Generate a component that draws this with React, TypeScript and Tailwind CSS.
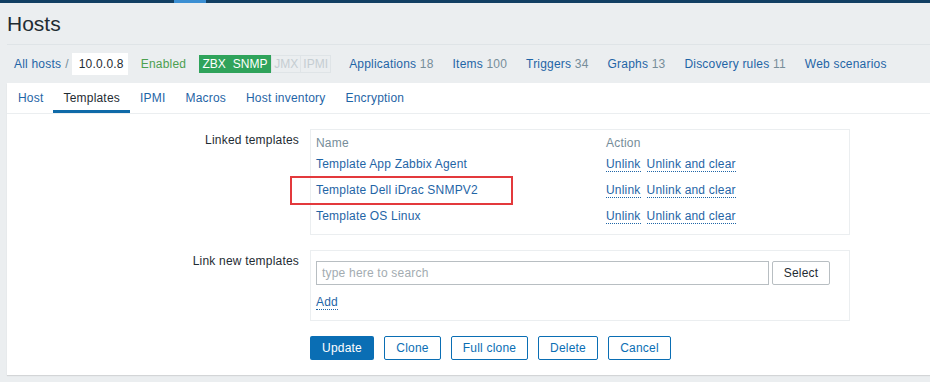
import React from 'react';

const linkCls = 'text-[#1f65a6]';

const navLinks: { label: string; count?: string }[] = [
  { label: 'Applications', count: '18' },
  { label: 'Items', count: '100' },
  { label: 'Triggers', count: '34' },
  { label: 'Graphs', count: '13' },
  { label: 'Discovery rules', count: '11' },
  { label: 'Web scenarios' },
];

const tabs = ['Host', 'Templates', 'IPMI', 'Macros', 'Host inventory', 'Encryption'];

const linked = ['Template App Zabbix Agent', 'Template Dell iDrac SNMPV2', 'Template OS Linux'];

const DotLink: React.FC<{ children: React.ReactNode; className?: string }> = ({ children, className = '' }) => (
  <span className={`${linkCls} border-b border-dotted border-[#1f65a6] leading-[14px] ${className}`}>{children}</span>
);

const App: React.FC = () => {
  return (
    <div className="min-h-[382px] overflow-hidden bg-[#ebeef0] font-['Liberation_Sans',Arial,sans-serif] text-[12px] tracking-[0.2px] text-[#1f2c33]">
      {/* top strip */}
      <div className="flex h-[3px] bg-[#113f63]">
        <div className="ml-[174px] w-[32px] bg-[#3b8fd3]" />
      </div>

      <div className="pl-[7px]">
        <div className="flex h-[42px] items-center border-b border-[#dfe4e7] pt-[1px]">
          <h1 className="text-[21px] leading-[24px] tracking-normal text-[#1f2c33]">Hosts</h1>
        </div>

        {/* breadcrumbs + host nav */}
        <div className="flex h-[38px] items-center whitespace-nowrap">
          <span className={`ml-[7px] ${linkCls}`}>All hosts</span>
          <span className="ml-[4px] text-[#768d99]">/</span>
          <span className="ml-[3px] flex h-[22px] w-[56px] items-center bg-white pl-[7px]">10.0.0.8</span>
          <span className="ml-[13px] text-[#4ba050]">Enabled</span>
          <div className="ml-[13px] flex h-[18px] items-center leading-[16px] tracking-normal">
            <span className="flex h-full w-[30px] items-center justify-center bg-[#2fa35b] text-white">ZBX</span>
            <span className="flex h-full w-[42px] items-center justify-center bg-[#2fa35b] text-white">SNMP</span>
            <span className="flex h-full w-[30px] items-center justify-center border border-[#dfe4e7] text-[#c5cdd2]">JMX</span>
            <span className="flex h-full w-[30px] items-center justify-center border border-l-0 border-[#dfe4e7] text-[#c5cdd2]">IPMI</span>
          </div>
          <div className="ml-[18px] flex gap-[19px]">
            {navLinks.map((n) => (
              <span key={n.label}>
                <span className={linkCls}>{n.label}</span>
                {n.count && <span className="text-[#768d99]"> {n.count}</span>}
              </span>
            ))}
          </div>
        </div>

        {/* main panel */}
        <div className="bg-white pb-[15px] shadow-[0_1px_1px_rgba(0,0,0,0.1)]">
          <div className="flex h-[31px] border-b border-[#ebeef0] pl-[1px]">
            {tabs.map((t) => (
              <div
                key={t}
                className={`flex items-center px-[10px] ${
                  t === 'Templates' ? 'border-b-[3px] border-[#0f6aa8] pt-[3px] text-[#1f2c33]' : linkCls
                }`}
              >
                {t}
              </div>
            ))}
          </div>

          {/* linked templates */}
          <div className="mt-[15px] flex">
            <div className="w-[292px] pt-[4px] text-right leading-[14px]">Linked templates</div>
            <div className="ml-[11px] w-[540px] border border-[#ebeef0] px-[5px] pt-[5px] pb-[5px]">
              <div className="flex h-[16px] items-center text-[#768d99]">
                <span className="w-[290px]">Name</span>
                <span>Action</span>
              </div>
              {linked.map((name, i) => (
                <div key={name} className="relative flex h-[26px] items-center">
                  <span className={`w-[290px] ${linkCls}`}>{name}</span>
                  <DotLink>Unlink</DotLink>
                  <DotLink className="ml-[6px]">Unlink and clear</DotLink>
                  {i === 1 && (
                    <span className="absolute left-[-26px] top-[-1px] h-[29px] w-[223px] border-2 border-[#e3393c]" />
                  )}
                </div>
              ))}
            </div>
          </div>

          {/* link new templates */}
          <div className="mt-[15px] flex">
            <div className="w-[292px] pt-[4px] text-right leading-[14px]">Link new templates</div>
            <div className="ml-[11px] w-[540px] border border-[#ebeef0] px-[5px] pt-[10px] pb-[11px]">
              <div className="flex items-center">
                <div className="flex h-[24px] w-[453px] items-center border border-[#b8bec2] px-[5px] text-[#a3acb1]">
                  type here to search
                </div>
                <button className="ml-[3px] h-[24px] w-[58px] rounded-[2px] border border-[#b8bec2] bg-white text-[#1f2c33]">
                  Select
                </button>
              </div>
              <div className="mt-[10px] flex h-[14px] items-center">
                <DotLink>Add</DotLink>
              </div>
            </div>
          </div>

          {/* buttons */}
          <div className="ml-[303px] mt-[15px] flex gap-[10px]">
            <button className="h-[24px] w-[64px] rounded-[2px] bg-[#0a6eb4] text-white">Update</button>
            {[
              ['Clone', 'w-[57px]'],
              ['Full clone', 'w-[77px]'],
              ['Delete', 'w-[60px]'],
              ['Cancel', 'w-[63px]'],
            ].map(([label, w]) => (
              <button
                key={label}
                className={`h-[24px] ${w} rounded-[2px] border border-[#0a6eb4] bg-white text-[#0a6eb4]`}
              >
                {label}
              </button>
            ))}
          </div>
        </div>
      </div>
    </div>
  );
};

export default App;
